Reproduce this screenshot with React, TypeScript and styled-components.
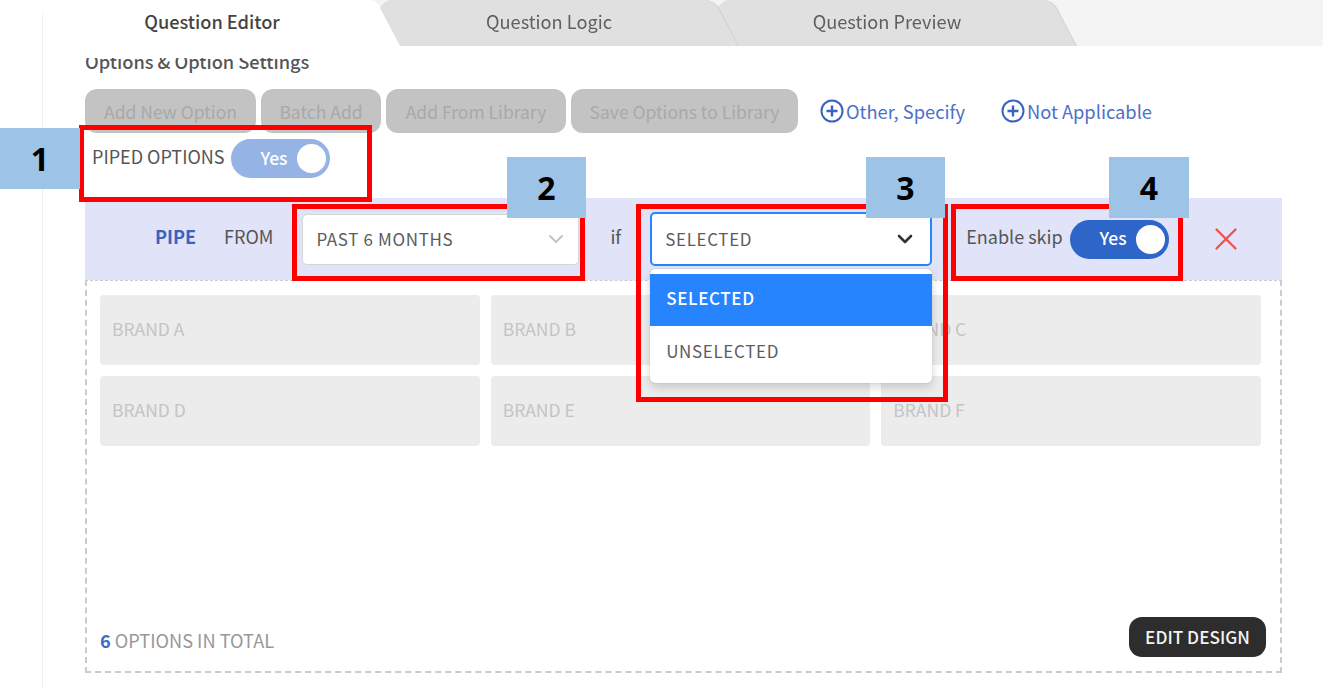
import React from "react";
import styled, { createGlobalStyle } from "styled-components";
import { ChevronDown, X } from "lucide-react";

const GlobalStyle = createGlobalStyle`
    html, body {
        margin: 0;
        padding: 0;
        background: #ffffff;
    }
    body {
        width: 1323px;
        height: 689px;
        overflow: hidden;
        font-family: "Noto Sans CJK KR", "Noto Sans", sans-serif;
    }
`;

const Page = styled.div`
    position: relative;
    width: 1323px;
    height: 689px;
    overflow: hidden;
`;

const Frame = styled.div`
    margin-left: 42px;
    height: 689px;
    border-left: 1px solid #ededed;
    border-top-left-radius: 18px;
    display: flex;
    flex-direction: column;
`;

const TabStrip = styled.div`
    display: flex;
    flex: none;
    height: 46px;
    background: #f4f4f4;
    border-top-left-radius: 18px;
`;

// the drop shadow sits here because the tab itself is clipped to its shape
const TabSlot = styled.div<{ $active?: boolean; $layer: number }>`
    position: relative;
    z-index: ${(p) => p.$layer};
    flex: none;
    margin-left: ${(p) => (p.$active ? "0" : "-20px")};
    filter: ${(p) => (p.$active ? "none" : "drop-shadow(1px 0 0 #cfcfcf)")};
`;

const tabShapes = {
    active: "M0 46V16Q0 0 16 0H327Q333 0 336 6L357 46Z",
    idle: "M20 46L1 14Q-2 8 3 4Q7 0 12 0H326Q334 1 338 8L358 46Z",
};

const Tab = styled.div<{ $active?: boolean }>`
    width: ${(p) => (p.$active ? 357 : 358)}px;
    height: 46px;
    padding: 0 ${(p) => (p.$active ? 19 : 20)}px 5px 0;
    box-sizing: border-box;
    display: flex;
    align-items: center;
    justify-content: center;
    font-size: 18.2px;
    font-weight: ${(p) => (p.$active ? 500 : 400)};
    color: ${(p) => (p.$active ? "#444444" : "#5f5f5f")};
    background: ${(p) => (p.$active ? "#ffffff" : "#e0e0e0")};
    clip-path: path("${(p) => (p.$active ? tabShapes.active : tabShapes.idle)}");
`;

const Body = styled.div`
    flex: 1;
    min-height: 0;
    overflow: hidden;
    padding: 0 41px 16px 42px;
    display: flex;
    flex-direction: column;
`;

/* the heading is cut off by the scroll area in the original, hence the tight line box */
const SectionTitle = styled.div`
    height: 23px;
    margin-top: 12px;
    line-height: 6px;
    overflow: hidden;
    font-size: 18.2px;
    font-weight: 500;
    color: #555555;
    flex: none;
`;

const Toolbar = styled.div`
    display: flex;
    align-items: center;
    height: 44px;
    margin-top: 8px;
    flex: none;
`;

const GhostButton = styled.div<{ $width: number }>`
    width: ${(p) => p.$width}px;
    height: 44px;
    margin-right: 5px;
    box-sizing: border-box;
    border-radius: 12px;
    background: #c3c3c3;
    color: #a9a9a9;
    font-size: 17.5px;
    display: flex;
    align-items: center;
    justify-content: center;
`;

const LinkButton = styled.div<{ $offset: number }>`
    display: flex;
    align-items: center;
    gap: 2px;
    margin-left: ${(p) => p.$offset}px;
    color: #4c70c9;
    font-size: 18.3px;
`;

const PipedRow = styled.div`
    display: flex;
    align-items: center;
    gap: 6px;
    padding-left: 7px;
    height: 39px;
    margin-top: 6px;
    flex: none;
    font-size: 18px;
    color: #555555;
`;

const RowLabel = styled.span`
    margin-bottom: 6px;
`;

const Toggle = styled.div<{ $muted?: boolean }>`
    width: 99px;
    height: 39px;
    box-sizing: border-box;
    border-radius: 20px;
    background: ${(p) => (p.$muted ? "#96b3e5" : "#2d65c8")};
    color: #ffffff;
    font-size: 17.5px;
    font-weight: 500;
    display: flex;
    align-items: center;
    justify-content: flex-end;
    gap: 9px;
    padding-right: 4px;
    flex: none;
`;

const ToggleText = styled.span`
    margin-bottom: 3px;
`;

const Knob = styled.div`
    width: 29px;
    height: 29px;
    border-radius: 50%;
    background: #ffffff;
`;

const PipeBar = styled.div`
    display: flex;
    align-items: center;
    height: 82px;
    margin-top: 20px;
    padding-left: 70px;
    background: #e1e3f8;
    flex: none;
    font-size: 18px;
    color: #555555;
`;

const PipeWord = styled.span`
    font-weight: 700;
    color: #3a62c0;
    margin: 0 28px 7px 0;
`;

const SelectBox = styled.div<{ $focused?: boolean; $width: number }>`
    position: relative;
    width: ${(p) => p.$width}px;
    height: ${(p) => (p.$focused ? 54 : 51)}px;
    box-sizing: border-box;
    padding: ${(p) => (p.$focused ? "0 13px 0 13px" : "0 10px 0 13px")};
    border-radius: 5px;
    background: #ffffff;
    border: ${(p) => (p.$focused ? "2px solid #2684ff" : "1px solid #d6d6d6")};
    display: flex;
    align-items: center;
    justify-content: space-between;
    font-size: 17px;
    letter-spacing: 0.65px;
    color: #5c5c5c;
    flex: none;
`;

const SelectValue = styled.span`
    margin-bottom: 2px;
`;

const FromLabel = styled.span`
    margin: 0 29px 7px 0;
`;

const IfLabel = styled.span`
    margin: 0 29px 6px 31px;
`;

const SkipLabel = styled.span`
    margin: 0 7px 7px 34px;
`;

const Remove = styled.div`
    margin-left: 38px;
    display: flex;
    color: #f0504f;
`;

const Menu = styled.div`
    position: absolute;
    z-index: 5;
    top: 55px;
    left: -2px;
    width: 282px;
    height: 114px;
    box-sizing: border-box;
    padding: 5px 0;
    background: #ffffff;
    border-radius: 5px;
    box-shadow: 0 0 1px rgba(0, 0, 0, 0.3), 0 4px 10px rgba(0, 0, 0, 0.16);
`;

const MenuItem = styled.div<{ $selected?: boolean }>`
    height: 52px;
    padding: 0 0 ${(p) => (p.$selected ? 6 : 4)}px 16px;
    box-sizing: border-box;
    display: flex;
    align-items: center;
    font-size: 17px;
    letter-spacing: 0.65px;
    font-weight: ${(p) => (p.$selected ? 500 : 400)};
    color: ${(p) => (p.$selected ? "#ffffff" : "#5c5c5c")};
    background: ${(p) => (p.$selected ? "#2684ff" : "transparent")};
`;

const OptionsBox = styled.div`
    flex: 1;
    min-height: 0;
    border: 2px dashed #cbcbcb;
    border-top-width: 1px;
    padding: 14px 14px 14px 13px;
    display: flex;
    flex-direction: column;
    justify-content: space-between;
`;

const OptionGrid = styled.div`
    display: grid;
    grid-template-columns: repeat(3, 1fr);
    grid-auto-rows: 70px;
    gap: 11px 11px;
    margin-right: 5px;
`;

const OptionCell = styled.div`
    background: #ececec;
    border-radius: 4px;
    padding: 0 12px 4px;
    display: flex;
    align-items: center;
    font-size: 17.5px;
    color: #c4c4c4;
`;

const BoxFooter = styled.div`
    display: flex;
    align-items: center;
    justify-content: space-between;
`;

const TotalText = styled.div`
    margin-top: 5px;
    font-size: 18.2px;
    color: #989898;
`;

const TotalCount = styled.span`
    color: #4468c6;
    font-weight: 700;
`;

const DesignButton = styled.div`
    width: 137px;
    height: 40px;
    padding-bottom: 2px;
    box-sizing: border-box;
    border-radius: 13px;
    background: #2d2d2d;
    color: #f2f2f2;
    font-size: 17.2px;
    font-weight: 500;
    display: flex;
    align-items: center;
    justify-content: center;
`;

const Marker = styled.div<{ $x: number; $y: number; $w: number; $h: number }>`
    position: absolute;
    z-index: 8;
    left: ${(p) => p.$x}px;
    top: ${(p) => p.$y}px;
    width: ${(p) => p.$w}px;
    height: ${(p) => p.$h}px;
    box-sizing: border-box;
    border: 5px solid #ff0000;
`;

const Badge = styled.div<{ $x: number; $y: number; $w: number }>`
    position: absolute;
    z-index: 9;
    left: ${(p) => p.$x}px;
    top: ${(p) => p.$y}px;
    width: ${(p) => p.$w}px;
    height: 61px;
    background: #9dc3e6;
    color: #000000;
    font-family: "Open Sans", "Noto Sans", sans-serif;
    font-size: 32px;
    font-weight: 700;
    display: flex;
    align-items: center;
    justify-content: center;
`;

const PlusIcon = () => (
    <svg width="24" height="24" viewBox="0 0 24 24" fill="none" stroke="#3a62c0" strokeWidth="2">
        <circle cx="12" cy="12" r="10.5" />
        <path d="M12 6.5v11M6.5 12h11" strokeWidth="2.4" />
    </svg>
);

const cells = ["BRAND A", "BRAND B", "BRAND C", "BRAND D", "BRAND E", "BRAND F"];

const markers = [
    { x: 79, y: 125, w: 293, h: 77 },
    { x: 292, y: 204, w: 293, h: 77 },
    { x: 636, y: 204, w: 312, h: 198 },
    { x: 951, y: 204, w: 232, h: 77 },
];

const badges = [
    { x: 0, y: 128, w: 80, label: "1" },
    { x: 507, y: 157, w: 79, label: "2" },
    { x: 866, y: 157, w: 79, label: "3" },
    { x: 1109, y: 157, w: 80, label: "4" },
];

const App = () => {
    return (
        <Page>
            <GlobalStyle />
            <Frame>
                <TabStrip>
                    <TabSlot $active $layer={3}><Tab $active>Question Editor</Tab></TabSlot>
                    <TabSlot $layer={2}><Tab>Question Logic</Tab></TabSlot>
                    <TabSlot $layer={1}><Tab>Question Preview</Tab></TabSlot>
                </TabStrip>
                <Body>
                    <SectionTitle>Options &amp; Option Settings</SectionTitle>
                    <Toolbar>
                        <GhostButton $width={171}>Add New Option</GhostButton>
                        <GhostButton $width={120}>Batch Add</GhostButton>
                        <GhostButton $width={180}>Add From Library</GhostButton>
                        <GhostButton $width={227}>Save Options to Library</GhostButton>
                        <LinkButton $offset={17}><PlusIcon />Other, Specify</LinkButton>
                        <LinkButton $offset={36}><PlusIcon />Not Applicable</LinkButton>
                    </Toolbar>
                    <PipedRow>
                        <RowLabel>PIPED OPTIONS</RowLabel>
                        <Toggle $muted><ToggleText>Yes</ToggleText><Knob /></Toggle>
                    </PipedRow>
                    <PipeBar>
                        <PipeWord>PIPE</PipeWord>
                        <FromLabel>FROM</FromLabel>
                        <SelectBox $width={277}>
                            <SelectValue>PAST 6 MONTHS</SelectValue>
                            <ChevronDown size={24} color="#c4c4c4" strokeWidth={2} />
                        </SelectBox>
                        <IfLabel>if</IfLabel>
                        <SelectBox $focused $width={282}>
                            <SelectValue>SELECTED</SelectValue>
                            <ChevronDown size={24} color="#333333" strokeWidth={2.6} />
                            <Menu>
                                <MenuItem $selected>SELECTED</MenuItem>
                                <MenuItem>UNSELECTED</MenuItem>
                            </Menu>
                        </SelectBox>
                        <SkipLabel>Enable skip</SkipLabel>
                        <Toggle><ToggleText>Yes</ToggleText><Knob /></Toggle>
                        <Remove><X size={38} strokeWidth={1.4} /></Remove>
                    </PipeBar>
                    <OptionsBox>
                        <OptionGrid>
                            {cells.map((cell) => (
                                <OptionCell key={cell}>{cell}</OptionCell>
                            ))}
                        </OptionGrid>
                        <BoxFooter>
                            <TotalText><TotalCount>6</TotalCount> OPTIONS IN TOTAL</TotalText>
                            <DesignButton>EDIT DESIGN</DesignButton>
                        </BoxFooter>
                    </OptionsBox>
                </Body>
            </Frame>
            {markers.map((m) => (
                <Marker key={m.x} $x={m.x} $y={m.y} $w={m.w} $h={m.h} />
            ))}
            {badges.map((b) => (
                <Badge key={b.label} $x={b.x} $y={b.y} $w={b.w}>{b.label}</Badge>
            ))}
        </Page>
    );
};

export default App;
